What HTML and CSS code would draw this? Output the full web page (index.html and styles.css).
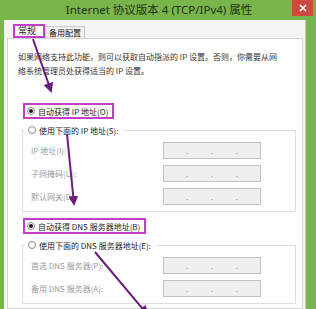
FILE: index.html
```html
<!DOCTYPE html>
<html lang="zh">
<head>
<meta charset="utf-8">
<link rel="stylesheet" href="styles.css">
</head>
<body>
<div class="window">
  <div class="titlebar">
    <div class="title">Internet 协议版本 4 (TCP/IPv4) 属性</div>
    <div class="close"><svg width="8" height="8" viewBox="0 0 8 8"><path d="M1 1L7 7M7 1L1 7" stroke="#ffffff" stroke-width="1.6"/></svg></div>
  </div>
  <div class="body">
    <div class="tabs">
      <div class="tab active mark">常规</div>
      <div class="tab">备用配置</div>
    </div>
    <div class="panel">
      <p class="desc">如果网络支持此功能，则可以获取自动指派的 IP 设置。否则，你需要从网<br>络系统管理员处获得适当的 IP 设置。</p>
      <div class="radio checked mark"><i class="dot"></i>自动获得 IP 地址(O)</div>
      <fieldset class="group">
        <legend class="radio"><i class="dot"></i>使用下面的 IP 地址(S):</legend>
        <div class="row"><span class="lbl">IP 地址(I):</span><span class="ip"><b></b>.<b></b>.<b></b>.<b></b></span></div>
        <div class="row"><span class="lbl">子网掩码(U):</span><span class="ip"><b></b>.<b></b>.<b></b>.<b></b></span></div>
        <div class="row"><span class="lbl">默认网关(D):</span><span class="ip"><b></b>.<b></b>.<b></b>.<b></b></span></div>
      </fieldset>
      <div class="radio checked mark second"><i class="dot"></i>自动获得 DNS 服务器地址(B)</div>
      <fieldset class="group">
        <legend class="radio"><i class="dot"></i>使用下面的 DNS 服务器地址(E):</legend>
        <div class="row"><span class="lbl">首选 DNS 服务器(P):</span><span class="ip"><b></b>.<b></b>.<b></b>.<b></b></span></div>
        <div class="row"><span class="lbl">备用 DNS 服务器(A):</span><span class="ip"><b></b>.<b></b>.<b></b>.<b></b></span></div>
      </fieldset>
    </div>
  </div>
  <svg class="arrows" width="316" height="309" viewBox="0 0 316 309">
    <defs>
      <marker id="ah" markerWidth="5" markerHeight="5" refX="4" refY="2.5" orient="auto" markerUnits="strokeWidth">
        <path d="M0 0L5 2.5L0 5Z" fill="#6a1d7c"/>
      </marker>
    </defs>
    <line x1="33" y1="39" x2="51" y2="91" stroke="#6a1d7c" stroke-width="2" marker-end="url(#ah)"/>
    <line x1="67" y1="134" x2="74" y2="204" stroke="#6a1d7c" stroke-width="2" marker-end="url(#ah)"/>
    <line x1="95" y1="252" x2="147" y2="314" stroke="#6a1d7c" stroke-width="2" marker-end="url(#ah)"/>
  </svg>
</div>
</body>
</html>
```

FILE: styles.css
```css
* { box-sizing: border-box; }
html, body { margin: 0; padding: 0; }
body {
  width: 316px;
  height: 309px;
  overflow: hidden;
  font-family: "Noto Sans CJK SC", "Noto Sans", sans-serif;
  font-size: 8px;
  color: #2a2a2a;
}
.window {
  position: relative;
  width: 316px;
  height: 309px;
  background: #78b54a;
  display: flex;
  flex-direction: column;
  overflow: hidden;
}
.titlebar {
  height: 20px;
  flex: none;
  position: relative;
}
.title {
  text-align: center;
  padding-left: 2px;
  font-family: "Noto Sans", "Noto Sans CJK SC", sans-serif;
  font-size: 11.5px;
  color: #22301a;
  line-height: 20px;
  white-space: nowrap;
}
.close {
  position: absolute;
  top: 0;
  right: 3px;
  width: 21px;
  height: 16px;
  background: #cf4a3c;
  display: flex;
  align-items: center;
  justify-content: center;
}
.body {
  flex: 1;
  margin: 0 10px 0 4px;
  background: #f4f4f4;
  padding: 4px 2px 0 3px;
  display: flex;
  flex-direction: column;
  border-right: 1px solid #c9c9c9;
}
.tabs {
  display: flex;
  align-items: flex-end;
  padding-left: 6px;
  height: 14px;
  flex: none;
}
.tab {
  height: 12px;
  line-height: 11px;
  padding: 0 3px;
  border: 1px solid #c8c8c8;
  border-bottom: none;
  background: #f0f0f0;
  color: #222;
  font-size: 8px;
}
.tab.active {
  height: 14px;
  line-height: 10px;
  width: 32px;
  padding: 0 3px;
  background: #fff;
  font-size: 9px;
  position: relative;
  z-index: 1;
}
.mark { border: 2px solid #c23ec8 !important; }
.panel {
  flex: 1;
  background: #fff;
  border: 1px solid #d4d4d4;
  padding: 0 7px 0 10px;
}
.desc {
  margin: 11px 0 0 0;
  line-height: 14px;
  color: #333;
  white-space: nowrap;
}
.radio {
  display: flex;
  align-items: center;
  height: 16px;
  border: 2px solid transparent;
  padding: 0 4px 0 2px;
  width: max-content;
  margin-left: 5px;
  color: #222;
  white-space: nowrap;
}
.panel > .radio { margin-top: 25px; }
.panel > .radio.second { margin-top: 6px; }
.dot {
  width: 8px;
  height: 8px;
  border: 1px solid #8a8a8a;
  border-radius: 50%;
  background: #fff;
  margin-right: 3px;
  display: flex;
  align-items: center;
  justify-content: center;
}
.checked .dot::after {
  content: "";
  width: 4px;
  height: 4px;
  border-radius: 50%;
  background: #1e1e1e;
}
.group {
  margin: 3px 0 0 4px;
  width: 274px;
  border: 1px solid #dedede;
  padding: 4px 34px 6px 8px;
  display: flex;
  flex-direction: column;
  gap: 6px;
}
.group legend {
  margin-left: -7px;
  padding: 0 4px 0 2px;
}
.row {
  display: grid;
  grid-template-columns: 1fr 98px;
  align-items: center;
  height: 17px;
}
.lbl { color: #9a9a9a; white-space: nowrap; }
.ip {
  height: 17px;
  background: #efefef;
  border: 1px solid #c2c2c2;
  display: flex;
  align-items: center;
  color: #8a8a8a;
  font-size: 8px;
}
.ip b { flex: 1; }
.arrows {
  position: absolute;
  left: 0;
  top: 0;
  pointer-events: none;
}
```
